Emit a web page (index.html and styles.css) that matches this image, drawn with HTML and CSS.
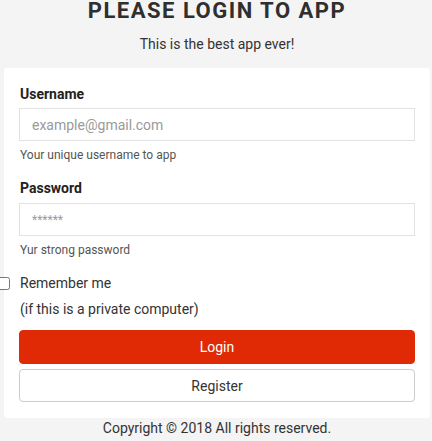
FILE: index.html
```html
<!DOCTYPE html>
<html>
<head>
<meta charset="utf-8">
<link rel="stylesheet" href="styles.css">
</head>
<body>
<div class="page">
  <h1 class="title">PLEASE LOGIN TO APP</h1>
  <p class="subtitle">This is the best app ever!</p>
  <div class="card">
    <div class="group">
      <label class="label">Username</label>
      <input class="input" type="text" placeholder="example@gmail.com">
      <div class="help">Your unique username to app</div>
    </div>
    <div class="group">
      <label class="label">Password</label>
      <input class="input pw" type="text" placeholder="******">
      <div class="help">Yur strong password</div>
    </div>
    <div class="check">
      <input class="box" type="checkbox">
      <span>Remember me</span>
    </div>
    <div class="note">(if this is a private computer)</div>
    <button class="btn primary">Login</button>
    <button class="btn secondary">Register</button>
  </div>
  <div class="footer">Copyright © 2018 All rights reserved.</div>
</div>
</body>
</html>
```
FILE: styles.css
```css
* { box-sizing: border-box; }
html, body { margin: 0; padding: 0; }
body {
  background: #f4f4f4;
  font-family: Roboto, "Noto Sans", sans-serif;
  color: #333;
}
.page {
  display: flex;
  flex-direction: column;
  padding: 0 2px 0 4px;
}
.title {
  margin: 0;
  font-size: 22px;
  line-height: 22px;
  font-weight: 700;
  letter-spacing: 1.5px;
  text-align: center;
  color: #2f2f2f;
}
.subtitle {
  margin: 13px 0 0;
  font-size: 14px;
  line-height: 18px;
  text-align: center;
  color: #333;
}
.card {
  margin-top: 15px;
  background: #fff;
  border-radius: 3px;
  padding: 17px 15px 16px;
  display: flex;
  flex-direction: column;
}
.group { display: flex; flex-direction: column; }
.label {
  font-size: 14px;
  font-weight: 700;
  line-height: 18px;
  color: #222;
  padding-left: 1px;
}
.input {
  margin-top: 5px;
  height: 33px;
  border: 1px solid #e2e2e2;
  background: #fff;
  padding: 0 12px;
  font-family: inherit;
  font-size: 14px;
  color: #333;
  outline: none;
}
.input::placeholder { color: #9a9a9a; }
.pw { font-size: 12px; margin-top: 6px; }
.help {
  margin-top: 6px;
  font-size: 12px;
  line-height: 16px;
  color: #555;
  padding-left: 1px;
}
.group + .group { margin-top: 16px; }
.check {
  margin-top: 16px;
  display: flex;
  align-items: center;
  font-size: 14px;
  line-height: 18px;
  color: #333;
  position: relative;
  padding-left: 1px;
}
.box {
  position: absolute;
  left: -22px;
  top: 3px;
  width: 13px;
  height: 13px;
  margin: 0;
}
.note {
  margin-top: 8px;
  font-size: 14px;
  line-height: 18px;
  color: #333;
  padding-left: 1px;
}
.btn {
  font-family: inherit;
  font-size: 14px;
  border-radius: 4px;
  width: 100%;
  cursor: pointer;
}
.primary {
  margin-top: 12px;
  height: 34px;
  background: #e02a05;
  border: 1px solid #e02a05;
  color: #fff;
}
.secondary {
  margin-top: 5px;
  height: 33px;
  background: #fff;
  border: 1px solid #ccc;
  color: #333;
}
.footer {
  margin-top: 1px;
  font-size: 14px;
  line-height: 18px;
  text-align: center;
  color: #333;
}
```
